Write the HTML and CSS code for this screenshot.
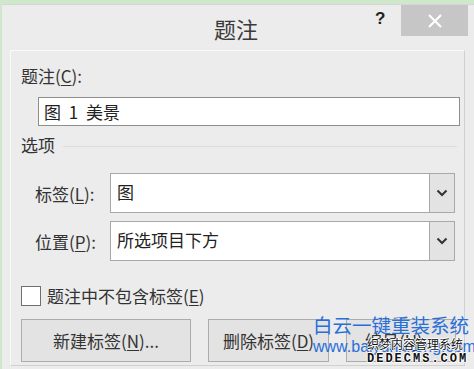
FILE: index.html
```html
<!DOCTYPE html>
<html lang="zh-CN">
<head>
  <meta charset="UTF-8">
  <title>题注</title>
  <link rel="stylesheet" href="styles.css">
</head>
<body>
  <div class="window">
    <div class="titlebar">
      <span class="title">题注</span>
      <span class="help">?</span>
      <span class="close">
        <svg width="16" height="16" viewBox="0 0 16 16"><path d="M2 2 L14 14 M14 2 L2 14" stroke="#fff" stroke-width="2"/></svg>
      </span>
    </div>

    <div class="panel">
      <div class="label">题注(<u>C</u>):</div>
      <div class="textbox">图 1 美景</div>

      <div class="group">
        <span>选项</span>
        <span class="rule"></span>
      </div>

      <div class="field">
        <span class="field-label">标签(<u>L</u>):</span>
        <div class="select">
          <span class="value">图</span>
          <span class="arrow"><svg width="12" height="8" viewBox="0 0 12 8"><path d="M1.5 1.5 L6 6 L10.5 1.5" fill="none" stroke="#333" stroke-width="2"/></svg></span>
        </div>
      </div>

      <div class="field">
        <span class="field-label">位置(<u>P</u>):</span>
        <div class="select">
          <span class="value">所选项目下方</span>
          <span class="arrow"><svg width="12" height="8" viewBox="0 0 12 8"><path d="M1.5 1.5 L6 6 L10.5 1.5" fill="none" stroke="#333" stroke-width="2"/></svg></span>
        </div>
      </div>

      <label class="check">
        <span class="box"></span>
        <span>题注中不包含标签(<u>E</u>)</span>
      </label>

      <div class="buttons">
        <button class="btn btn-new">新建标签(<u>N</u>)...</button>
        <button class="btn btn-del">删除标签(<u>D</u>)</button>
        <button class="btn btn-num">编号(<u>U</u>)...</button>
      </div>
    </div>

    <div class="watermark">
      <div class="wm-name">白云一键重装系统</div>
      <div class="wm-url">www.baiyunxitong.com</div>
      <div class="wm-dede">织梦内容管理系统</div>
      <div class="wm-dede-url">DEDECMS.COM</div>
    </div>
  </div>
</body>
</html>
```

FILE: styles.css
```css
* {
  margin: 0;
  padding: 0;
  box-sizing: border-box;
}

body {
  font-family: "Noto Sans CJK SC", "Noto Sans", sans-serif;
  color: #333;
  background: #ededed;
}

u {
  text-decoration: underline;
  text-underline-offset: 2px;
}

.window {
  position: relative;
  width: 474px;
  height: 369px;
  background: #ececec;
  border-top: 4px solid #cfe7cb;
  border-left: 2px solid #cfe7cb;
  overflow: hidden;
}

.titlebar {
  display: flex;
  align-items: flex-start;
  height: 46px;
  border-top: 1px solid #d6d6d6;
}

.title {
  margin-left: 212px;
  margin-top: 8px;
  font-size: 22px;
  line-height: 30px;
  color: #3a3a3a;
}

.help {
  margin-left: 117px;
  margin-top: 4px;
  font-family: "Liberation Sans", sans-serif;
  font-weight: bold;
  font-size: 17px;
  color: #222;
}

.close {
  display: flex;
  align-items: center;
  justify-content: center;
  margin-left: 16px;
  width: 67px;
  height: 31px;
  background: #c6c6c6;
}

.panel {
  margin-left: 8px;
  width: 455px;
  height: 316px;
  border: 1px solid #fafafa;
  border-bottom-color: #d0d0d0;
  border-right-color: #d0d0d0;
  padding: 15px 0 0 10px;
  font-size: 17px;
}

.label {
  line-height: 20px;
}

.textbox {
  margin: 11px 0 0 17px;
  width: 422px;
  height: 29px;
  background: #fff;
  border: 1px solid #8e8e8e;
  padding-left: 5px;
  line-height: 27px;
  word-spacing: 4px;
  color: #222;
}

.group {
  display: flex;
  align-items: center;
  margin-top: 9px;
  line-height: 20px;
}

.rule {
  flex: 1;
  margin: 2px 7px 0 8px;
  border-top: 1px solid #dcdcdc;
}

.field {
  display: flex;
  align-items: center;
  margin-top: 18px;
}

.field + .field {
  margin-top: 8px;
}

.field-label {
  flex: none;
  width: 89px;
  padding-left: 14px;
}

.select {
  display: flex;
  width: 345px;
  height: 40px;
  background: #fff;
  border: 1px solid #a9a9a9;
}

.value {
  flex: 1;
  padding-left: 6px;
  line-height: 36px;
  color: #222;
}

.arrow {
  display: flex;
  align-items: center;
  justify-content: center;
  width: 25px;
  background: #e3e3e3;
  border-left: 1px solid #a9a9a9;
}

.check {
  display: flex;
  align-items: center;
  margin-top: 22px;
  gap: 6px;
}

.box {
  width: 20px;
  height: 20px;
  background: #fff;
  border: 1px solid #6f6f6f;
}

.buttons {
  display: flex;
  gap: 17px;
  margin-top: 11px;
}

.btn {
  height: 43px;
  font-family: inherit;
  font-size: 17px;
  color: #333;
  background: #e3e3e3;
  border: 1px solid #acacac;
  white-space: nowrap;
}

.btn-new {
  width: 170px;
}

.btn-del {
  width: 121px;
}

.btn-num {
  width: 110px;
}

/* watermark sits over the bottom right button */
.watermark {
  position: absolute;
  left: 311px;
  top: 308px;
  width: 163px;
  white-space: nowrap;
}

.wm-name {
  font-size: 19.5px;
  line-height: 26px;
  color: #2a6fd8;
}

.wm-url {
  font-family: "Liberation Sans", sans-serif;
  font-size: 16px;
  line-height: 18px;
  color: #2a6fd8;
}

.wm-dede {
  position: absolute;
  left: 54px;
  top: 24px;
  font-size: 12px;
  line-height: 16px;
  color: #111;
  text-shadow: 1px 0 #fff, -1px 0 #fff, 0 1px #fff, 0 -1px #fff;
}

.wm-dede-url {
  position: absolute;
  left: 54px;
  top: 40px;
  font-family: "Liberation Mono", monospace;
  font-weight: bold;
  font-size: 12px;
  line-height: 14px;
  letter-spacing: 2px;
  color: #111;
  text-shadow: 1px 0 #fff, -1px 0 #fff, 0 1px #fff, 0 -1px #fff;
}
```
